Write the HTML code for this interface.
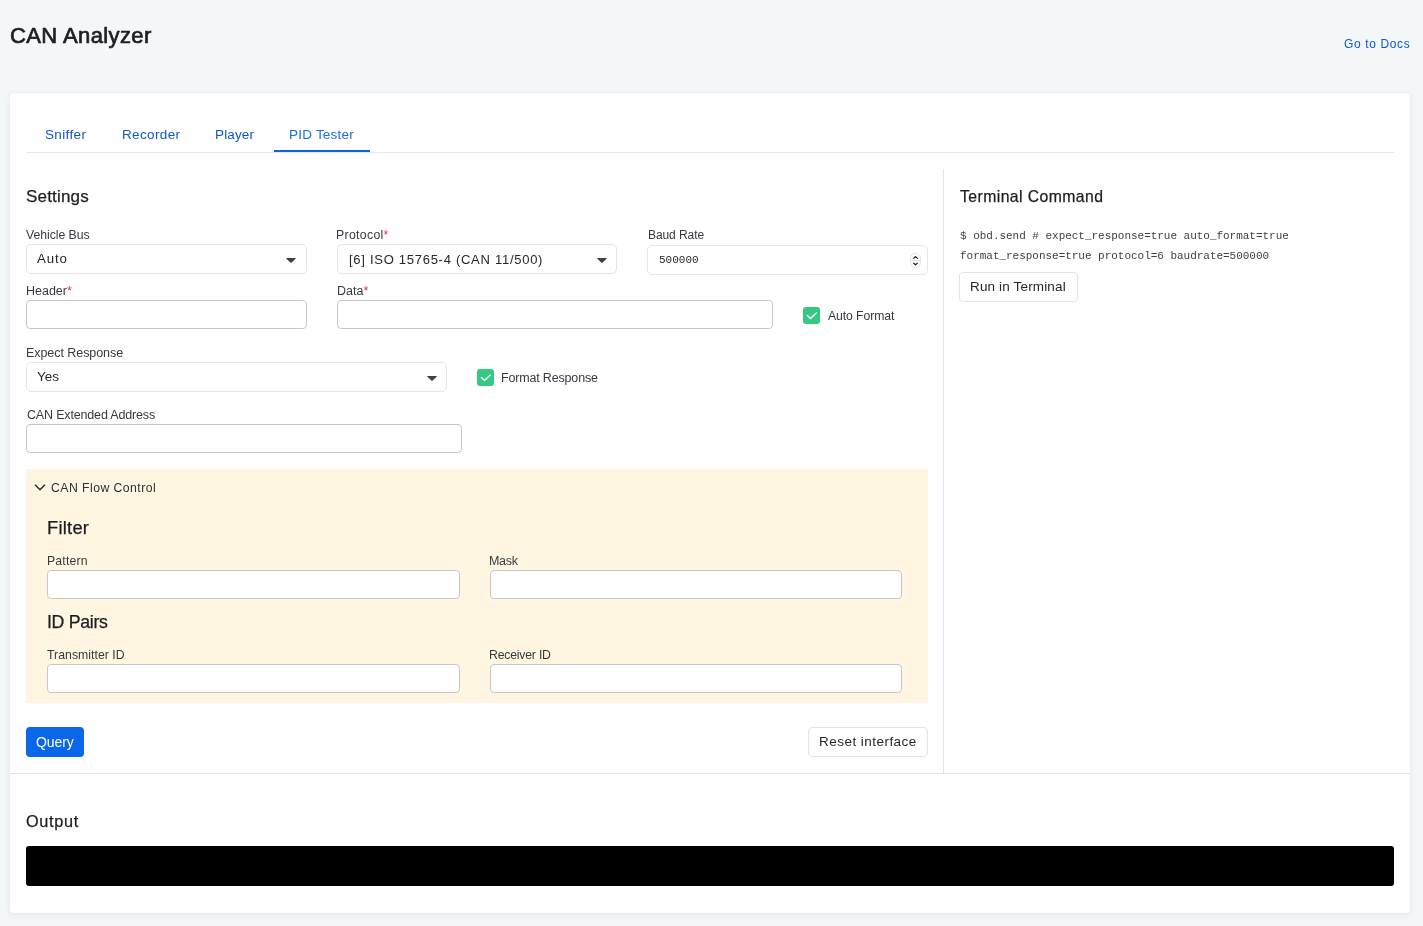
<!DOCTYPE html>
<html>
<head>
<meta charset="utf-8">
<style>
html,body{margin:0;padding:0;}
body{width:1423px;height:926px;background:#f4f7f8;position:relative;overflow:hidden;font-family:"Liberation Sans", sans-serif;}
.a{position:absolute;box-sizing:border-box;}
.t{position:absolute;white-space:nowrap;will-change:transform;}
.card{left:10px;top:93px;width:1400px;height:820px;background:#fff;border-radius:4px;box-shadow:0 2px 10px rgba(30,40,50,0.06),0 0 2px rgba(30,40,50,0.05);}
.sel{background:#fff;border:1px solid #e2e6ea;border-radius:5px;}
.inp{background:#fff;border:1px solid #c6c8ca;border-radius:4px;}
.btn{background:#fff;border:1px solid #dfe3e7;border-radius:4px;}
.cb{width:17px;height:17px;background:#34c97e;border-radius:3px;}
</style>
</head>
<body>
<div class="a card"></div>
<!-- tab line -->
<div class="a" style="left:26px;top:152px;width:1368px;height:1px;background:#e3e7eb"></div>
<div class="a" style="left:274px;top:150px;width:96px;height:2px;background:#0d63e6"></div>
<!-- dividers -->
<div class="a" style="left:943px;top:169px;width:1px;height:604px;background:#e2e4e6"></div>
<div class="a" style="left:10px;top:773px;width:1400px;height:1px;background:#e2e4e6"></div>

<!-- row 1 -->
<div class="a sel" style="left:26px;top:244px;width:281px;height:30px"></div>
<svg class="a" style="left:285px;top:257px" width="12" height="7" viewBox="0 0 12 7"><path d="M1.6 1 L10.4 1 Q11.2 1 10.6 1.7 L6.6 5.6 Q6 6.2 5.4 5.6 L1.4 1.7 Q0.8 1 1.6 1Z" fill="#3b4147"/></svg>
<div class="a sel" style="left:337px;top:244px;width:280px;height:30px"></div>
<svg class="a" style="left:596px;top:257px" width="12" height="7" viewBox="0 0 12 7"><path d="M1.6 1 L10.4 1 Q11.2 1 10.6 1.7 L6.6 5.6 Q6 6.2 5.4 5.6 L1.4 1.7 Q0.8 1 1.6 1Z" fill="#3b4147"/></svg>
<div class="a" style="left:647px;top:245px;width:281px;height:30px;background:#fff;border:1px solid #e6e6e6;border-radius:5px"></div>
<svg class="a" style="left:909px;top:252px" width="13" height="17" viewBox="0 0 13 17">
<rect x="1.5" y="1.3" width="10" height="14.4" rx="5" fill="#fff" stroke="#e2e2e2" stroke-width="1"/>
<line x1="1.5" y1="8.5" x2="11.5" y2="8.5" stroke="#e2e2e2" stroke-width="1"/>
<path d="M4.3 6.6 L6.5 4.7 L8.7 6.6" fill="none" stroke="#2a2a2a" stroke-width="1.25"/>
<path d="M4.3 10.9 L6.5 12.8 L8.7 10.9" fill="none" stroke="#2a2a2a" stroke-width="1.25"/>
</svg>

<!-- row 2 -->
<div class="a inp" style="left:26px;top:300px;width:281px;height:29px"></div>
<div class="a inp" style="left:337px;top:300px;width:436px;height:29px"></div>
<div class="a cb" style="left:803px;top:307px"></div>
<svg class="a" style="left:803px;top:307px" width="17" height="17" viewBox="0 0 17 17"><path d="M4.4 8.4 L7.4 11.5 L13.3 5.9" fill="none" stroke="#fff" stroke-width="1.4" stroke-linecap="round" stroke-linejoin="round"/></svg>

<!-- row 3 -->
<div class="a sel" style="left:26px;top:362px;width:421px;height:30px"></div>
<svg class="a" style="left:426px;top:375px" width="12" height="7" viewBox="0 0 12 7"><path d="M1.6 1 L10.4 1 Q11.2 1 10.6 1.7 L6.6 5.6 Q6 6.2 5.4 5.6 L1.4 1.7 Q0.8 1 1.6 1Z" fill="#3b4147"/></svg>
<div class="a cb" style="left:477px;top:369px"></div>
<svg class="a" style="left:477px;top:369px" width="17" height="17" viewBox="0 0 17 17"><path d="M4.4 8.4 L7.4 11.5 L13.3 5.9" fill="none" stroke="#fff" stroke-width="1.4" stroke-linecap="round" stroke-linejoin="round"/></svg>

<!-- row 4 -->
<div class="a inp" style="left:26px;top:424px;width:436px;height:29px"></div>

<!-- flow control panel -->
<div class="a" style="left:26px;top:469px;width:902px;height:234px;background:#fff6e1"></div>
<svg class="a" style="left:32.5px;top:482.4px" width="14" height="10" viewBox="0 0 14 10"><path d="M2 2.7 L7 7.7 L12 2.7" fill="none" stroke="#2b3035" stroke-width="1.6"/></svg>
<div class="a inp" style="left:47px;top:570px;width:413px;height:29px"></div>
<div class="a inp" style="left:490px;top:570px;width:412px;height:29px"></div>
<div class="a inp" style="left:47px;top:664px;width:413px;height:29px"></div>
<div class="a inp" style="left:490px;top:664px;width:412px;height:29px"></div>

<!-- buttons -->
<div class="a" style="left:26px;top:727px;width:58px;height:30px;background:#0b67ea;border-radius:4px"></div>
<div class="a btn" style="left:808px;top:727px;width:120px;height:30px"></div>
<div class="a btn" style="left:959px;top:272px;width:119px;height:30px"></div>

<!-- terminal text -->
<div class="t" style="left:959.5px;top:226px;font-family:'Liberation Mono', monospace;font-size:11px;line-height:20px;color:#3a3f44;letter-spacing:-0.025px">$ obd.send # expect_response=true auto_format=true<br>format_response=true protocol=6 baudrate=500000</div>

<!-- output -->
<div class="a" style="left:26px;top:846px;width:1368px;height:40px;background:#000;border-radius:3px"></div>

<div class="t" style='left:9.80px;top:24.78px;font-size:22px;line-height:22px;color:#1c1f23;letter-spacing:0.397px;font-family:"Liberation Sans", sans-serif;-webkit-text-stroke:0.7px #1c1f23'>CAN Analyzer</div>
<div class="t" style='left:1343.70px;top:37.64px;font-size:12.0px;line-height:12.0px;color:#0b57d0;letter-spacing:0.631px;font-family:"Liberation Sans", sans-serif'>Go to Docs</div>
<div class="t" style='left:45.30px;top:128.07px;font-size:13.5px;line-height:13.5px;color:#1058c9;letter-spacing:0.354px;font-family:"Liberation Sans", sans-serif'>Sniffer</div>
<div class="t" style='left:121.50px;top:128.07px;font-size:13.5px;line-height:13.5px;color:#1058c9;letter-spacing:0.353px;font-family:"Liberation Sans", sans-serif'>Recorder</div>
<div class="t" style='left:215.40px;top:128.07px;font-size:13.5px;line-height:13.5px;color:#1058c9;letter-spacing:0.126px;font-family:"Liberation Sans", sans-serif'>Player</div>
<div class="t" style='left:288.90px;top:128.07px;font-size:13.5px;line-height:13.5px;color:#1c6ce6;letter-spacing:0.220px;font-family:"Liberation Sans", sans-serif'>PID Tester</div>
<div class="t" style='left:26.00px;top:187.51px;font-size:17.0px;line-height:17.0px;color:#1b1d20;letter-spacing:0.182px;font-family:"Liberation Sans", sans-serif;-webkit-text-stroke:0.25px #1b1d20'>Settings</div>
<div class="t" style='left:26.20px;top:228.53px;font-size:12.25px;line-height:12.25px;color:#343a40;letter-spacing:-0.049px;font-family:"Liberation Sans", sans-serif'>Vehicle Bus</div>
<div class="t" style='left:336.40px;top:228.53px;font-size:12.25px;line-height:12.25px;color:#343a40;letter-spacing:0.333px;font-family:"Liberation Sans", sans-serif'>Protocol<span style="color:#d9364a">*</span></div>
<div class="t" style='left:647.60px;top:228.74px;font-size:12.0px;line-height:12.0px;color:#343a40;letter-spacing:-0.079px;font-family:"Liberation Sans", sans-serif'>Baud Rate</div>
<div class="t" style='left:37.20px;top:252.48px;font-size:13.25px;line-height:13.25px;color:#23272b;letter-spacing:0.871px;font-family:"Liberation Sans", sans-serif'>Auto</div>
<div class="t" style='left:348.60px;top:252.50px;font-size:13.0px;line-height:13.0px;color:#23272b;letter-spacing:0.723px;font-family:"Liberation Sans", sans-serif'>[6] ISO 15765-4 (CAN 11/500)</div>
<div class="t" style='left:658.60px;top:254.69px;font-size:11px;line-height:11px;color:#23272b;letter-spacing:-0.001px;font-family:"Liberation Mono", monospace'>500000</div>
<div class="t" style='left:25.80px;top:285.12px;font-size:12.5px;line-height:12.5px;color:#343a40;letter-spacing:-0.016px;font-family:"Liberation Sans", sans-serif'>Header<span style="color:#d9364a">*</span></div>
<div class="t" style='left:336.60px;top:285.12px;font-size:12.5px;line-height:12.5px;color:#343a40;letter-spacing:0.049px;font-family:"Liberation Sans", sans-serif'>Data<span style="color:#d9364a">*</span></div>
<div class="t" style='left:828.00px;top:309.63px;font-size:12.25px;line-height:12.25px;color:#343a40;letter-spacing:-0.100px;font-family:"Liberation Sans", sans-serif'>Auto Format</div>
<div class="t" style='left:26.00px;top:347.32px;font-size:12.5px;line-height:12.5px;color:#343a40;letter-spacing:-0.059px;font-family:"Liberation Sans", sans-serif'>Expect Response</div>
<div class="t" style='left:37.30px;top:370.27px;font-size:13.5px;line-height:13.5px;color:#23272b;letter-spacing:0.000px;font-family:"Liberation Sans", sans-serif'>Yes</div>
<div class="t" style='left:501.40px;top:372.22px;font-size:12.5px;line-height:12.5px;color:#343a40;letter-spacing:-0.171px;font-family:"Liberation Sans", sans-serif'>Format Response</div>
<div class="t" style='left:26.50px;top:409.42px;font-size:12.5px;line-height:12.5px;color:#343a40;letter-spacing:-0.166px;font-family:"Liberation Sans", sans-serif'>CAN Extended Address</div>
<div class="t" style='left:50.80px;top:481.63px;font-size:12.25px;line-height:12.25px;color:#2b3035;letter-spacing:0.447px;font-family:"Liberation Sans", sans-serif'>CAN Flow Control</div>
<div class="t" style='left:46.80px;top:518.55px;font-size:18.25px;line-height:18.25px;color:#1b1d20;letter-spacing:0.265px;font-family:"Liberation Sans", sans-serif;-webkit-text-stroke:0.25px #1b1d20'>Filter</div>
<div class="t" style='left:47.40px;top:554.63px;font-size:12.25px;line-height:12.25px;color:#343a40;letter-spacing:0.186px;font-family:"Liberation Sans", sans-serif'>Pattern</div>
<div class="t" style='left:489.40px;top:555.42px;font-size:12.5px;line-height:12.5px;color:#343a40;letter-spacing:-0.305px;font-family:"Liberation Sans", sans-serif'>Mask</div>
<div class="t" style='left:46.50px;top:613.97px;font-size:17.75px;line-height:17.75px;color:#1b1d20;letter-spacing:-0.321px;font-family:"Liberation Sans", sans-serif;-webkit-text-stroke:0.25px #1b1d20'>ID Pairs</div>
<div class="t" style='left:47.40px;top:649.33px;font-size:12.25px;line-height:12.25px;color:#343a40;letter-spacing:0.039px;font-family:"Liberation Sans", sans-serif'>Transmitter ID</div>
<div class="t" style='left:489.40px;top:649.33px;font-size:12.25px;line-height:12.25px;color:#343a40;letter-spacing:-0.204px;font-family:"Liberation Sans", sans-serif'>Receiver ID</div>
<div class="t" style='left:35.60px;top:735.05px;font-size:14.0px;line-height:14.0px;color:#ffffff;letter-spacing:-0.106px;font-family:"Liberation Sans", sans-serif'>Query</div>
<div class="t" style='left:818.80px;top:735.37px;font-size:13.5px;line-height:13.5px;color:#23272b;letter-spacing:0.465px;font-family:"Liberation Sans", sans-serif'>Reset interface</div>
<div class="t" style='left:26.30px;top:813.04px;font-size:16.25px;line-height:16.25px;color:#1b1d20;letter-spacing:0.687px;font-family:"Liberation Sans", sans-serif;-webkit-text-stroke:0.25px #1b1d20'>Output</div>
<div class="t" style='left:959.90px;top:189.17px;font-size:15.75px;line-height:15.75px;color:#1b1d20;letter-spacing:0.428px;font-family:"Liberation Sans", sans-serif;-webkit-text-stroke:0.25px #1b1d20'>Terminal Command</div>
<div class="t" style='left:970.20px;top:280.37px;font-size:13.5px;line-height:13.5px;color:#23272b;letter-spacing:0.151px;font-family:"Liberation Sans", sans-serif'>Run in Terminal</div>
</body>
</html>
